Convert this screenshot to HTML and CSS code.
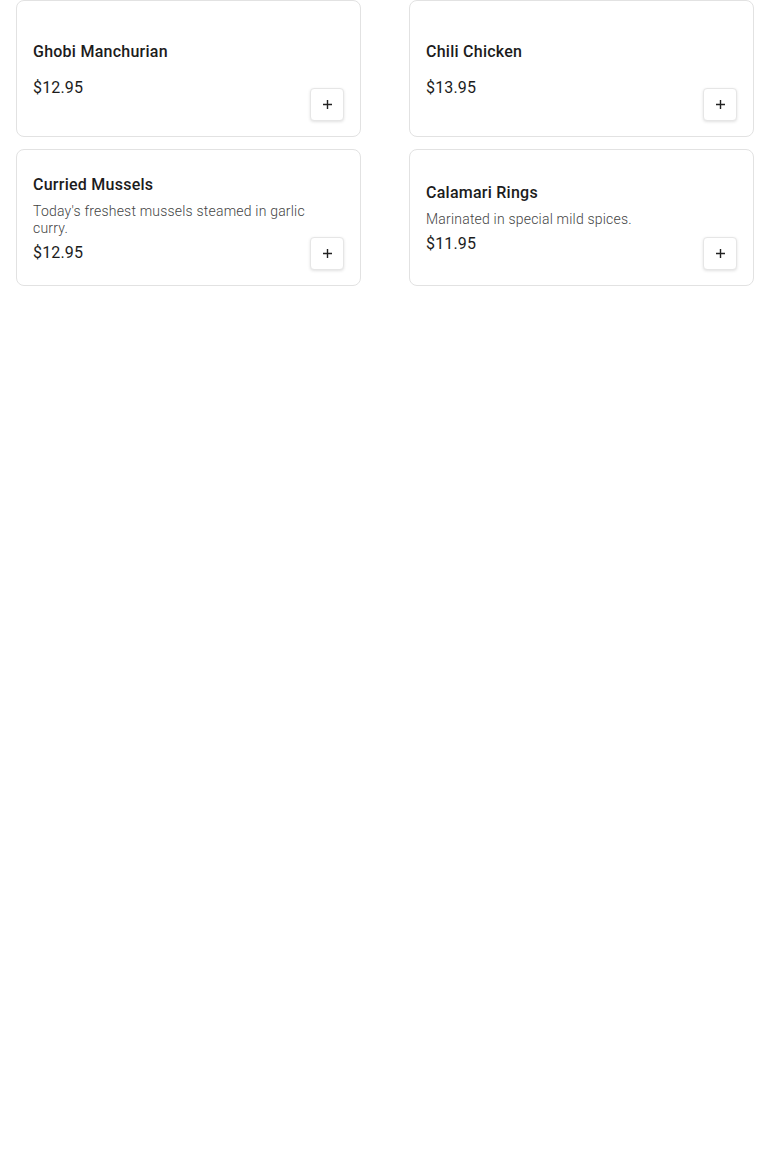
FILE: index.html
```html
<!DOCTYPE html>
<html lang="en">

<head>
	<meta charset="UTF-8">
	<meta name="viewport" content="width=device-width, initial-scale=1.0">
	<title>Menu</title>
	<link rel="stylesheet" href="styles.css">
</head>

<body>
	<div class="menu">
		<div class="item">
			<div class="info">
				<p class="name">Ghobi Manchurian</p>
				<p class="price solo">$12.95</p>
			</div>
			<button type="button" class="add">
				<svg width="11" height="11" viewBox="0 0 11 11"><path d="M5.5 1v9M1 5.5h9" stroke="#222" stroke-width="1.4" fill="none"/></svg>
			</button>
		</div>

		<div class="item">
			<div class="info">
				<p class="name">Chili Chicken</p>
				<p class="price solo">$13.95</p>
			</div>
			<button type="button" class="add">
				<svg width="11" height="11" viewBox="0 0 11 11"><path d="M5.5 1v9M1 5.5h9" stroke="#222" stroke-width="1.4" fill="none"/></svg>
			</button>
		</div>

		<div class="item">
			<div class="info">
				<p class="name">Curried Mussels</p>
				<p class="desc">Today's freshest mussels steamed in garlic curry.</p>
				<p class="price">$12.95</p>
			</div>
			<button type="button" class="add">
				<svg width="11" height="11" viewBox="0 0 11 11"><path d="M5.5 1v9M1 5.5h9" stroke="#222" stroke-width="1.4" fill="none"/></svg>
			</button>
		</div>

		<div class="item">
			<div class="info">
				<p class="name">Calamari Rings</p>
				<p class="desc">Marinated in special mild spices.</p>
				<p class="price">$11.95</p>
			</div>
			<button type="button" class="add">
				<svg width="11" height="11" viewBox="0 0 11 11"><path d="M5.5 1v9M1 5.5h9" stroke="#222" stroke-width="1.4" fill="none"/></svg>
			</button>
		</div>
	</div>
</body>

</html>
```

FILE: styles.css
```css
body {
	margin: 0;
	background: #ffffff;
	font-family: Roboto, "Liberation Sans", sans-serif;
}

.menu {
	display: grid;
	grid-template-columns: 1fr 1fr;
	column-gap: 48px;
	row-gap: 12px;
	padding: 0 16px;
}

.item {
	display: grid;
	grid-template-columns: 1fr;
	grid-template-rows: 1fr;
	box-sizing: border-box;
	height: 137px;
	padding: 16px;
	border: 1px solid #e2e2e2;
	border-radius: 8px;
	background: #fff;
}

.info {
	grid-area: 1 / 1;
	display: flex;
	flex-direction: column;
	justify-content: center;
	padding-top: 2px;
	padding-right: 18px;
}

.info p {
	margin: 0;
}

.name {
	font-size: 16px;
	font-weight: 500;
	line-height: 24px;
	letter-spacing: 0.25px;
	color: #1c1c1c;
	margin-bottom: 6px !important;
}

.desc {
	font-size: 14px;
	font-weight: 300;
	line-height: 17px;
	letter-spacing: 0.2px;
	color: #444;
	margin-bottom: 4px !important;
}

.price {
	font-size: 16px;
	line-height: 24px;
	letter-spacing: 0.15px;
	color: #1c1c1c;
}

.price.solo {
	margin-top: 6px;
}

.add {
	grid-area: 1 / 1;
	justify-self: end;
	align-self: end;
	width: 34px;
	height: 33px;
	margin-bottom: -1px;
	padding: 0;
	display: flex;
	align-items: center;
	justify-content: center;
	background: #fff;
	border: 1px solid #e6e6e6;
	border-radius: 4px;
	box-shadow: 0 1px 3px rgba(0, 0, 0, 0.12);
	cursor: pointer;
}
```
